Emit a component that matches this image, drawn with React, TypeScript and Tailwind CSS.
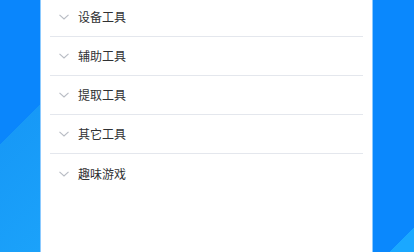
const groups = ["设备工具", "辅助工具", "提取工具", "其它工具", "趣味游戏"];

function Chevron() {
  return (
    <svg width="10" height="6" viewBox="0 0 10 6" fill="none" stroke="#b8bcc4" strokeWidth="1.1" className="shrink-0">
      <path d="M0.5 0.8L5 5L9.5 0.8" />
    </svg>
  );
}

export default function App() {
  return (
    <div className="flex h-[252px] w-[414px] overflow-hidden font-['Noto_Sans_CJK_SC',sans-serif]">
      <div className="w-[40px] shrink-0 bg-[linear-gradient(135deg,#0a86fc_102px,#1799f7_102px,#1ba2fa)]" />

      <div className="w-[333px] shrink-0 border-x border-[#8ccaff] bg-white px-[9px]">
        <div className="-mt-[2px]">
          {groups.map((name, i) => (
            <div
              key={name}
              className={`flex h-[39px] items-center gap-[9px] pl-[9px] ${
                i < groups.length - 1 ? "border-b border-[#e4e7ed]" : ""
              }`}
            >
              <Chevron />
              <span className="text-[12px] leading-none text-[#303133]">{name}</span>
            </div>
          ))}
        </div>
      </div>

      <div className="w-[41px] shrink-0 bg-[linear-gradient(135deg,#0a88fd_190px,#1aa8ff_190px)]" />
    </div>
  );
}
